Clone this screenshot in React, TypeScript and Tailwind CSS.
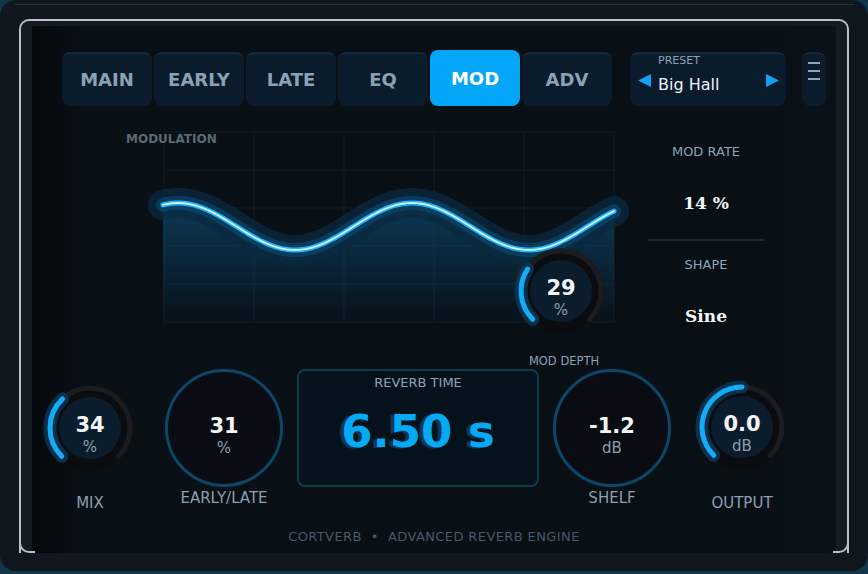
import React from 'react'

const TABS = ['MAIN', 'EARLY', 'LATE', 'EQ', 'MOD', 'ADV']

function pt(cx: number, cy: number, r: number, a: number) {
  const t = (a * Math.PI) / 180
  return [cx + r * Math.sin(t), cy - r * Math.cos(t)]
}

function arc(cx: number, cy: number, r: number, a0: number, a1: number) {
  const [x0, y0] = pt(cx, cy, r, a0)
  const [x1, y1] = pt(cx, cy, r, a1)
  const large = a1 - a0 > 180 ? 1 : 0
  return `M${x0.toFixed(2)} ${y0.toFixed(2)} A${r} ${r} 0 ${large} 1 ${x1.toFixed(2)} ${y1.toFixed(2)}`
}

// sine wave in page coordinates
function buildWave() {
  let d = ''
  for (let x = 163; x <= 614; x += 1) {
    const y = 226.5 - 23.5 * Math.cos((2 * Math.PI * (x - 178)) / 234)
    d += (x === 163 ? 'M' : 'L') + x + ' ' + y.toFixed(2) + ' '
  }
  return d
}
const WAVE = buildWave()

function Knob({ value, unit, fraction }: { value: string; unit: string; fraction: number }) {
  const end = 225 + fraction * 270
  return (
    <div className="relative w-[100px] h-[100px]">
      <svg width="100" height="100" viewBox="0 0 100 100" className="absolute inset-0">
        <circle cx="50" cy="50" r="42.5" fill="#0a0c10" />
        <path d={arc(50, 50, 40, 225, 495)} stroke="#1b1c1f" strokeWidth="5" fill="none" strokeLinecap="round" />
        <path d={arc(50, 50, 40, 225, end)} stroke="#0b3652" strokeWidth="13" fill="none" strokeLinecap="round" opacity="0.85" />
        <path d={arc(50, 50, 40, 225, end)} stroke="#12adf6" strokeWidth="5" fill="none" strokeLinecap="round" />
        <circle cx="50" cy="50" r="31" fill="#0b1c2c" />
      </svg>
      <div className="absolute inset-0 flex flex-col items-center justify-center pt-[12px]">
        <div className="text-[21px] leading-[24px] font-bold text-[#f1f5f9]">{value}</div>
        <div className="text-[15px] leading-[16px] mt-[2px] text-[#8d9fb0]">{unit}</div>
      </div>
    </div>
  )
}

function RingDial({ value, unit }: { value: string; unit: string }) {
  return (
    <div className="w-[118px] h-[118px] rounded-full border-[3px] border-[#0c4668] bg-[#090c12] flex flex-col items-center justify-center pt-[14px]">
      <div className="text-[21px] leading-[24px] font-bold text-[#f1f5f9]">{value}</div>
      <div className="text-[15px] leading-[16px] mt-[2px] text-[#8d9fb0]">{unit}</div>
    </div>
  )
}

function ModGraph() {
  const vs = [164, 254, 344, 434, 524, 614]
  const hs = [132, 170, 208, 246, 284, 322]
  return (
    <svg width="488" height="214" viewBox="126 126 488 214" className="overflow-visible">
      <defs>
        <linearGradient id="fillg" x1="0" y1="200" x2="0" y2="322" gradientUnits="userSpaceOnUse">
          <stop offset="0" stopColor="#0e4c74" stopOpacity="0.7" />
          <stop offset="1" stopColor="#0e4c74" stopOpacity="0.04" />
        </linearGradient>
      </defs>
      {vs.map((x) => (
        <line key={'v' + x} x1={x} y1={132} x2={x} y2={322} stroke="#101c27" strokeWidth="1" />
      ))}
      {hs.map((y) => (
        <line key={'h' + y} x1={164} y1={y} x2={614} y2={y} stroke="#101c27" strokeWidth="1" />
      ))}
      <path d={WAVE + 'L614 322 L163 322 Z'} fill="url(#fillg)" />
      <path d={WAVE} stroke="#0a2a40" strokeWidth="30" fill="none" strokeLinecap="round" strokeLinejoin="round" opacity="0.75" />
      <path d={WAVE} stroke="#0b4468" strokeWidth="14" fill="none" strokeLinecap="round" strokeLinejoin="round" opacity="0.75" />
      <path d={WAVE} stroke="#1ab4ff" strokeWidth="5" fill="none" strokeLinecap="round" strokeLinejoin="round" />
      <path d={WAVE} stroke="#d4f3ff" strokeWidth="1.8" fill="none" strokeLinecap="round" strokeLinejoin="round" />
    </svg>
  )
}

export default function App() {
  return (
    <div className="w-[868px] h-[574px] bg-[#11364a] overflow-hidden font-['DejaVu_Sans',sans-serif]">
      <div className="h-[571px] rounded-[16px] bg-[#11171e] pt-[4px]">
        <div className="mx-[14px] h-px bg-[#2a323b]" />
        <div className="relative mt-[14px] mx-[19px] h-[534px] rounded-t-[10px] border-x-2 border-t-2 border-[#b8c0c8] bg-[#141b23] pt-[5px] px-[11px]">
          <div className="absolute -left-[2px] bottom-0 z-20 w-[16px] h-[14px] rounded-bl-[10px] border-l-2 border-b-2 border-[#b8c0c8]" />
          <div className="absolute -right-[2px] bottom-0 z-20 w-[16px] h-[14px] rounded-br-[10px] border-r-2 border-b-2 border-[#b8c0c8]" />
          <div className="relative z-10 h-[527px] flex flex-col bg-[linear-gradient(to_right,#05090d_0%,#080f15_6%,#080f15_90%,#0b1118_100%)]">
            {/* top bar */}
            <div className="mt-[24px] h-[56px] flex items-end">
              <div className="ml-[30px] flex items-end gap-[2px]">
                {TABS.map((t) =>
                  t === 'MOD' ? (
                    <div key={t} className="w-[90px] h-[56px] rounded-[8px] bg-[#04a6fa] flex items-center justify-center text-[18px] font-bold text-white">
                      {t}
                    </div>
                  ) : (
                    <div key={t} className="w-[90px] h-[54px] rounded-[8px] bg-[#0a1b2b] border-t-2 border-[#16283a] flex items-center justify-center text-[18px] font-bold text-[#8aa1b6] pb-[2px]">
                      {t}
                    </div>
                  )
                )}
              </div>
              <div className="ml-[18px] w-[156px] h-[54px] rounded-[8px] bg-[#0a1b2b] border-t-2 border-[#16283a] flex items-center pl-[8px] pr-[7px]">
                <svg width="13" height="13" viewBox="0 0 13 13">
                  <path d="M0 6.5 L13 0 L13 13 Z" fill="#13a2f2" />
                </svg>
                <div className="flex-1 self-stretch ml-[7px] pt-[1px]">
                  <div className="text-[11px] leading-[12px] text-[#8ea2b4]">PRESET</div>
                  <div className="text-[16px] leading-[20px] mt-[8px] text-[#eef3f8]">Big Hall</div>
                </div>
                <svg width="13" height="13" viewBox="0 0 13 13">
                  <path d="M13 6.5 L0 0 L0 13 Z" fill="#13a2f2" />
                </svg>
              </div>
              <div className="ml-[16px] w-[24px] h-[54px] rounded-[8px] bg-[#0a1b2b] border-t-2 border-[#16283a] flex flex-col items-center pt-[8px] gap-[6px]">
                <div className="w-[12px] h-[2px] bg-[#8ea3b5]" />
                <div className="w-[12px] h-[2px] bg-[#8ea3b5]" />
                <div className="w-[12px] h-[2px] bg-[#8ea3b5]" />
              </div>
            </div>

            {/* middle */}
            <div className="h-[263px] flex">
              <div className="relative ml-[94px] mt-[20px] w-[488px] h-[214px]">
                <ModGraph />
                <div className="absolute left-0 top-[7px] text-[12px] leading-[12px] font-bold text-[#5b6976]">MODULATION</div>
                <div className="absolute left-[385px] top-[115px]">
                  <Knob value="29" unit="%" fraction={0.29} />
                </div>
                <div className="absolute left-[388px] top-[229px] w-[100px] text-center text-[11.5px] leading-[12px] text-[#8ea2b4]">MOD DEPTH</div>
              </div>
              <div className="ml-[34px] w-[116px] pt-[38px] flex flex-col items-center">
                <div className="text-[13px] leading-[16px] text-[#8ea2b4]">MOD RATE</div>
                <div className="mt-[33px] text-[17px] leading-[20px] font-bold text-[#f3f6f9] font-['DejaVu_Serif',serif]">14 %</div>
                <div className="mt-[26px] w-[116px] h-[1.5px] bg-[#1c2731]" />
                <div className="mt-[16px] text-[13px] leading-[16px] text-[#8ea2b4]">SHAPE</div>
                <div className="mt-[33px] text-[17px] leading-[20px] font-bold text-[#f3f6f9] font-['DejaVu_Serif',serif]">Sine</div>
              </div>
            </div>

            {/* bottom controls */}
            <div className="h-[160px] flex items-start">
              <div className="ml-[8px] w-[100px] mt-[9px] flex flex-col items-center">
                <Knob value="34" unit="%" fraction={0.34} />
                <div className="mt-[16px] text-[15px] leading-[18px] text-[#8d9fb0]">MIX</div>
              </div>
              <div className="ml-[25px] w-[118px] flex flex-col items-center">
                <RingDial value="31" unit="%" />
                <div className="mt-[2px] text-[15px] leading-[18px] text-[#8d9fb0] whitespace-nowrap">EARLY/LATE</div>
              </div>
              <div className="ml-[14px] w-[242px] h-[118px] rounded-[8px] border-2 border-[#0c3a4c] bg-[#05121c] flex flex-col items-center pt-[4px]">
                <div className="text-[13px] leading-[16px] text-[#8ea2b4]">REVERB TIME</div>
                <div className="mt-[17px] text-[45px] leading-[48px] font-bold text-[#05aaf7] [text-shadow:-4px_1px_1px_#0b3a56]">6.50 s</div>
              </div>
              <div className="ml-[14px] w-[118px] flex flex-col items-center">
                <RingDial value="-1.2" unit="dB" />
                <div className="mt-[2px] text-[15px] leading-[18px] text-[#8d9fb0]">SHELF</div>
              </div>
              <div className="ml-[21px] w-[100px] mt-[8px] flex flex-col items-center">
                <Knob value="0.0" unit="dB" fraction={0.5} />
                <div className="mt-[17px] text-[15px] leading-[18px] text-[#8d9fb0]">OUTPUT</div>
              </div>
            </div>

            {/* footer */}
            <div className="h-[16px] text-center text-[13px] leading-[16px] tracking-[0.4px] text-[#4a5867] whitespace-pre">
              {'CORTVERB  •  ADVANCED REVERB ENGINE'}
            </div>
          </div>
        </div>
      </div>
    </div>
  )
}
